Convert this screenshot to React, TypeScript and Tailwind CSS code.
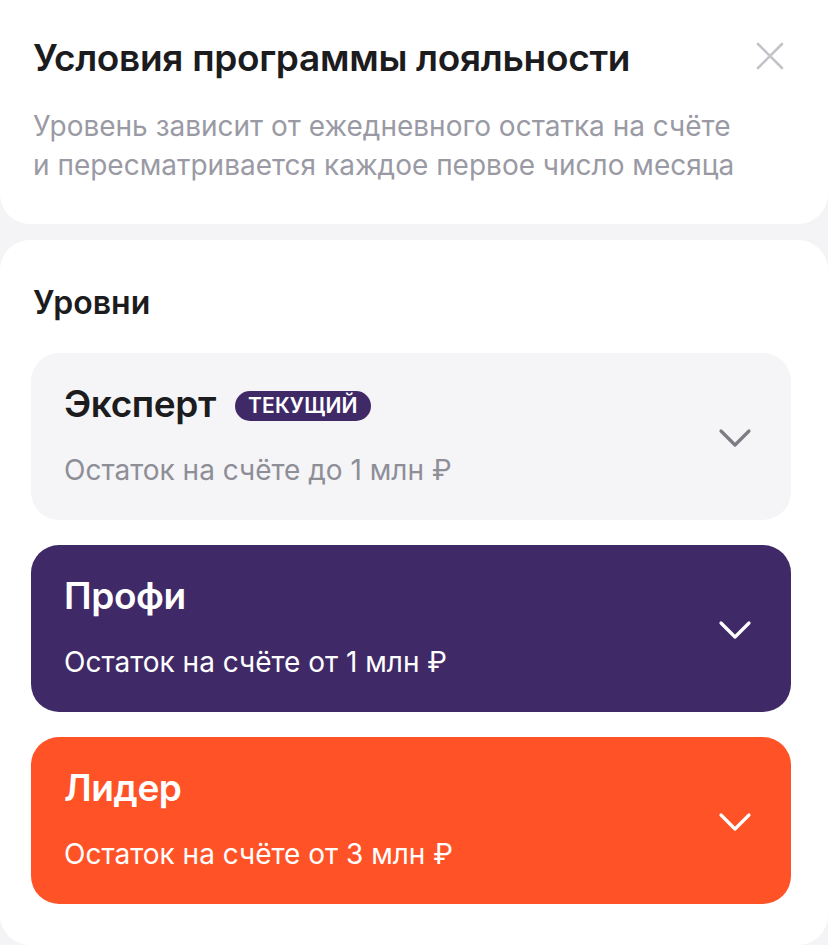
const levels = [
  {
    name: "Эксперт",
    note: "Остаток на счёте до 1 млн ₽",
    current: true,
    card: "bg-[#f5f5f7]",
    title: "text-[#1c1c1e]",
    sub: "text-[#8e8e97]",
    icon: "text-[#7c7c84]",
  },
  {
    name: "Профи",
    note: "Остаток на счёте от 1 млн ₽",
    current: false,
    card: "bg-[#3f2a67]",
    title: "text-white",
    sub: "text-white",
    icon: "text-white",
  },
  {
    name: "Лидер",
    note: "Остаток на счёте от 3 млн ₽",
    current: false,
    card: "bg-[#ff5327]",
    title: "text-white",
    sub: "text-white",
    icon: "text-white",
  },
]

function Chevron({ className }: { className?: string }) {
  return (
    <svg width="34" height="22" viewBox="0 0 34 22" fill="none" className={className}>
      <path d="M3 4 L17 18 L31 4" stroke="currentColor" strokeWidth="3.2" strokeLinecap="round" strokeLinejoin="round" />
    </svg>
  )
}

function Cross() {
  return (
    <svg width="28" height="28" viewBox="0 0 28 28" fill="none">
      <path d="M2 2 L26 26 M26 2 L2 26" stroke="currentColor" strokeWidth="2.6" strokeLinecap="round" />
    </svg>
  )
}

export default function App() {
  return (
    <div
      className="min-h-[945px] w-[828px] bg-[#f4f4f6]"
      style={{ fontFamily: "Inter, 'Noto Sans', sans-serif" }}
    >
      {/* Header */}
      <div className="rounded-b-[30px] bg-white px-[33px] pt-[36px] pb-[39px]">
        <div className="flex items-start justify-between">
          <h1 className="text-[37px] leading-[44px] font-semibold tracking-[-0.3px] text-[#1c1c1e]">
            Условия программы лояльности
          </h1>
          <button className="mt-[6px] mr-[11px] text-[#c3c3c9]">
            <Cross />
          </button>
        </div>
        <p className="mt-[27px] text-[28px] leading-[39px] text-[#9a9aa5]">
          Уровень зависит от ежедневного остатка на счёте
          <br />
          и пересматривается каждое первое число месяца
        </p>
      </div>

      {/* Levels */}
      <div className="mt-[16px] rounded-[30px] bg-white pt-[43px] pr-[37px] pb-[41px] pl-[31px]">
        <h2 className="px-[2px] text-[32px] leading-[40px] font-semibold text-[#1c1c1e]">
          Уровни
        </h2>
        <div className="mt-[30px] flex flex-col gap-[25px]">
          {levels.map((l) => (
            <div
              key={l.name}
              className={`flex h-[167px] justify-between rounded-[28px] pr-[39px] pl-[33px] ${l.card}`}
            >
              <div className="flex flex-col pt-[29px]">
                <div className="flex items-center gap-[19px]">
                  <span className={`text-[37px] leading-[44px] font-semibold tracking-[-0.4px] ${l.title}`}>
                    {l.name}
                  </span>
                  {l.current && (
                    <span className="mt-[4px] rounded-full bg-[#3f2a67] px-[13px] text-[21px] leading-[30px] font-semibold tracking-[0.2px] text-white">
                      ТЕКУЩИЙ
                    </span>
                  )}
                </div>
                <span className={`mt-[27px] text-[28px] leading-[34px] ${l.sub}`}>
                  {l.note}
                </span>
              </div>
              <Chevron className={`mt-[2px] self-center ${l.icon}`} />
            </div>
          ))}
        </div>
      </div>
    </div>
  )
}
